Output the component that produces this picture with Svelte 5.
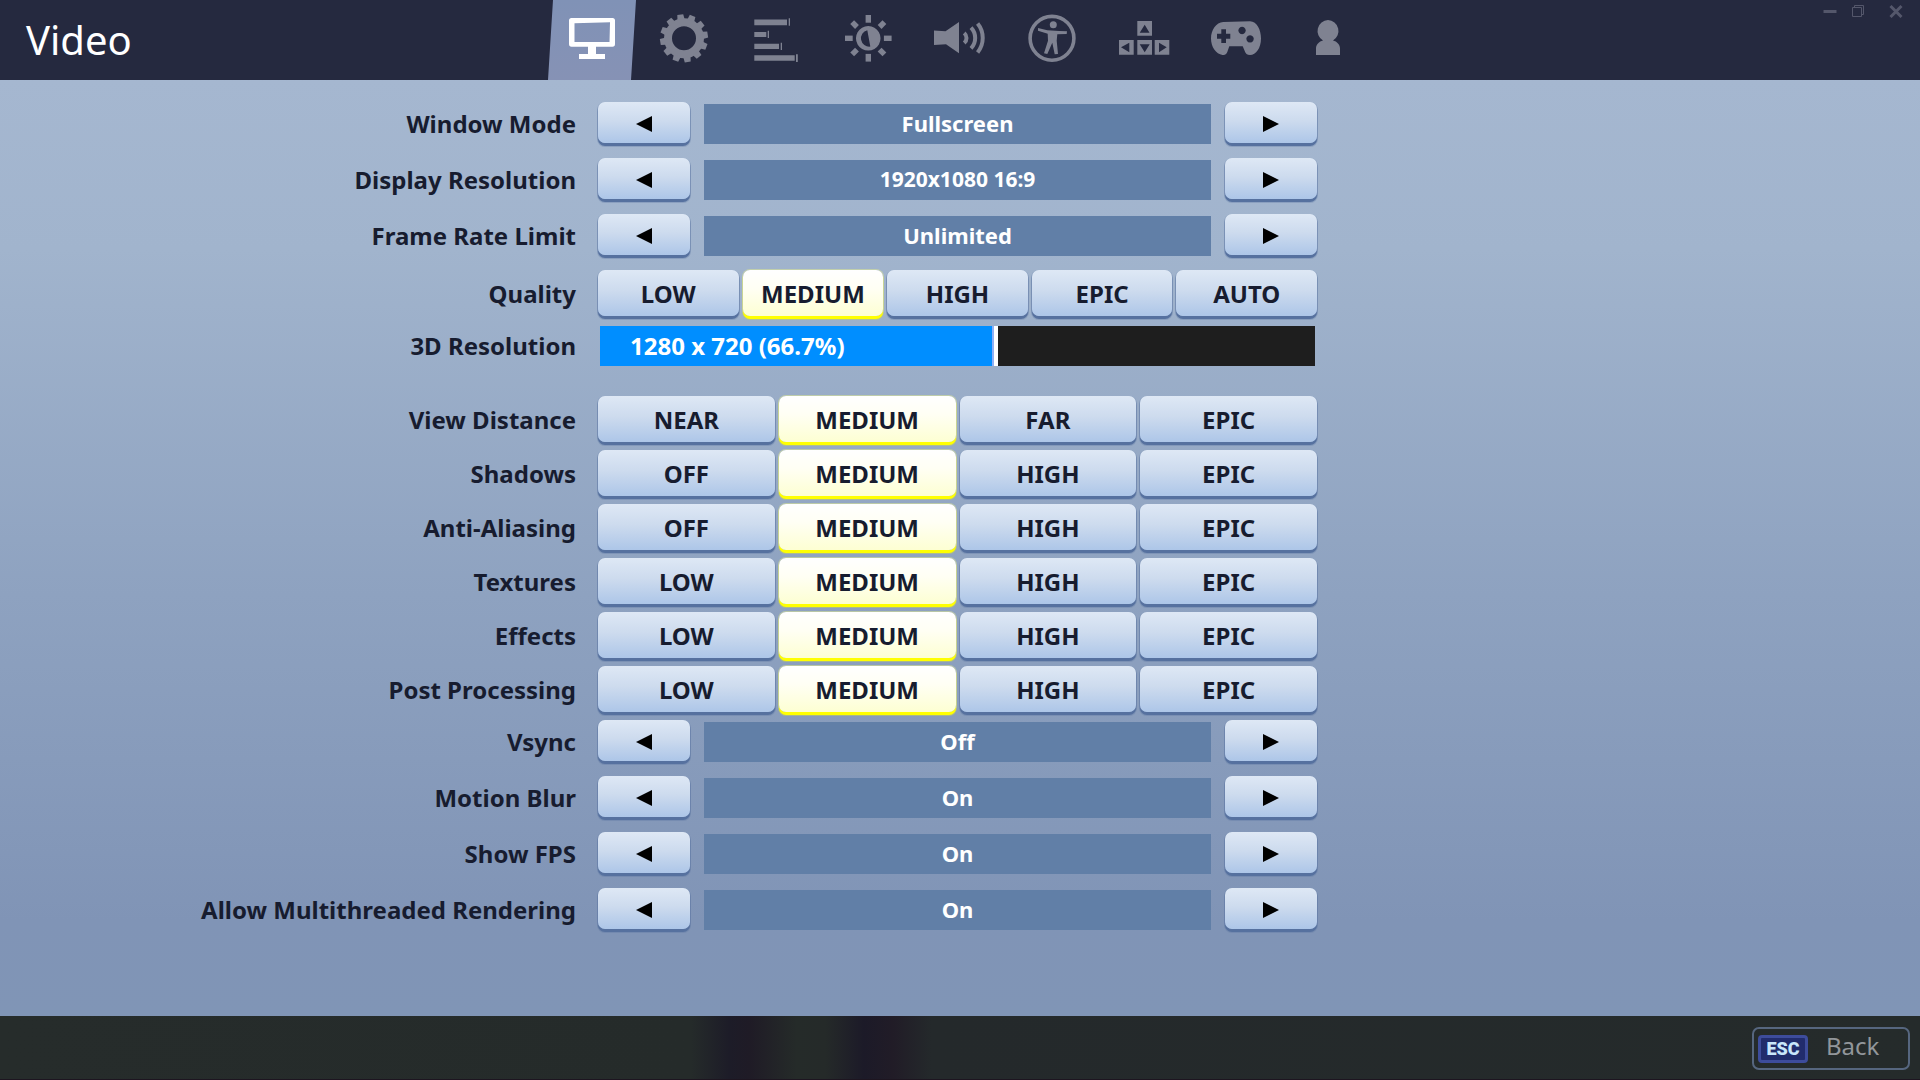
<script lang="ts">
  type Setting = {
    id: string;
    label: string;
    kind: 'cycle' | 'choice' | 'slider';
    options: string[];
    index: number;
  };

  const tabs = [
    'Video', 'Game', 'Game UI', 'Brightness', 'Audio',
    'Accessibility', 'Input', 'Controller', 'Account'
  ];
  let activeTab = $state(0);

  // Each group becomes one block of evenly spaced rows
  let groups: { name: string; rows: Setting[] }[] = $state([
    {
      name: 'display',
      rows: [
        { id: 'window-mode', label: 'Window Mode', kind: 'cycle', options: ['Fullscreen', 'Windowed', 'Borderless'], index: 0 },
        { id: 'resolution', label: 'Display Resolution', kind: 'cycle', options: ['1920x1080 16:9', '1600x900 16:9', '1280x720 16:9'], index: 0 },
        { id: 'frame-rate', label: 'Frame Rate Limit', kind: 'cycle', options: ['Unlimited', '144 FPS', '60 FPS', '30 FPS'], index: 0 },
        { id: 'quality', label: 'Quality', kind: 'choice', options: ['LOW', 'MEDIUM', 'HIGH', 'EPIC', 'AUTO'], index: 1 }
      ]
    },
    {
      name: 'scale',
      rows: [{ id: 'resolution-3d', label: '3D Resolution', kind: 'slider', options: [], index: 0 }]
    },
    {
      name: 'details',
      rows: [
        { id: 'view-distance', label: 'View Distance', kind: 'choice', options: ['NEAR', 'MEDIUM', 'FAR', 'EPIC'], index: 1 },
        { id: 'shadows', label: 'Shadows', kind: 'choice', options: ['OFF', 'MEDIUM', 'HIGH', 'EPIC'], index: 1 },
        { id: 'anti-aliasing', label: 'Anti-Aliasing', kind: 'choice', options: ['OFF', 'MEDIUM', 'HIGH', 'EPIC'], index: 1 },
        { id: 'textures', label: 'Textures', kind: 'choice', options: ['LOW', 'MEDIUM', 'HIGH', 'EPIC'], index: 1 },
        { id: 'effects', label: 'Effects', kind: 'choice', options: ['LOW', 'MEDIUM', 'HIGH', 'EPIC'], index: 1 },
        { id: 'post-processing', label: 'Post Processing', kind: 'choice', options: ['LOW', 'MEDIUM', 'HIGH', 'EPIC'], index: 1 }
      ]
    },
    {
      name: 'toggles',
      rows: [
        { id: 'vsync', label: 'Vsync', kind: 'cycle', options: ['Off', 'On'], index: 0 },
        { id: 'motion-blur', label: 'Motion Blur', kind: 'cycle', options: ['Off', 'On'], index: 1 },
        { id: 'show-fps', label: 'Show FPS', kind: 'cycle', options: ['Off', 'On'], index: 1 },
        { id: 'multithreading', label: 'Allow Multithreaded Rendering', kind: 'cycle', options: ['Off', 'On'], index: 1 }
      ]
    }
  ]);

  // 3D resolution is stored as its height in lines
  const minLines = 274;
  const maxLines = 1080;
  let lines = $state(720);
  let scaleText = $derived(
    `${Math.round((lines * 16) / 9)} x ${lines} (${((lines / maxLines) * 100).toFixed(1)}%)`
  );
  let fill = $derived(((lines - minLines) / (maxLines - minLines)) * 100);

  function step(row: Setting, by: number) {
    row.index = (row.index + by + row.options.length) % row.options.length;
  }
</script>

{#snippet icon(i: number)}
  <svg class="icon" viewBox="0 0 92 80" fill="currentColor" aria-hidden="true">
    {#if i === 0}
      <path fill-rule="evenodd" d="M25.500 18H66.500Q69 18 69 20.500V44Q69 46.700 66.500 46.700H50V54H59V59H33V54H42V46.700H25.500Q23 46.700 23 44V20.500Q23 18 25.500 18ZM28.500 23.300V42H63.500L64 22.300Z" />
    {:else if i === 1}
      <circle cx="46" cy="38.300" r="16" fill="none" stroke="currentColor" stroke-width="8" />
      {#each Array(12) as _, n}
        <polygon points="42.400,19.500 43,14.300 49,14.300 49.600,19.500" transform="rotate({n * 30 - 9} 46 38.300)" />
      {/each}
    {:else if i === 2}
      <path d="M24.300 19.500H57V25.300H24.300ZM58.700 18.300H60V25.700H58.700ZM24.300 32H36.300V37H24.300ZM37.700 30.700H39V38H37.700ZM24.300 43.700H49V49H24.300ZM50.700 42.700H52V50H50.700ZM24.300 55.300H64.700V60.700H24.300ZM66 54.300H67.800V62H66Z" />
    {:else if i === 3}
      <path fill-rule="evenodd" d="M46.300 26A12.300 12.300 0 1 1 46.200 26ZM45.300 30.300A8.300 8.300 0 0 0 48.300 46.600Z" />
      {#each Array(4) as _, n}
        <g transform="rotate({n * 90} 46.300 38.300)">
          <rect x="43.600" y="15" width="5.400" height="7.700" />
          <rect x="43.600" y="15.500" width="5.400" height="6.800" transform="rotate(45 46.300 38.300)" />
        </g>
      {/each}
    {:else if i === 4}
      <polygon points="20,30.500 31.500,31.300 45,22 45,53.300 32,44.300 20,45" />
      <path fill="none" stroke="currentColor" stroke-width="4" d="M50.200 32.900A6.800 6.800 0 0 1 50.200 43.100M57 27.700A14.800 14.800 0 0 1 57 48.300M63.600 23.600A22.800 22.800 0 0 1 63.600 52.400" />
    {:else if i === 5}
      <circle cx="46" cy="38.300" r="21.900" fill="none" stroke="currentColor" stroke-width="3.600" />
      <circle cx="47.300" cy="24.800" r="3.500" />
      <polygon points="32,28 41.300,30.300 53.300,31 61,31.300 60.700,34 51.300,34.300 50.700,40.700 52,54 48.700,54.300 46.300,42.700 41.300,54 38,53.300 42,40.700 41.700,33.700 32,30.700" />
    {:else if i === 6}
      <path fill-rule="evenodd" d="M39.300 21H54V35.700H39.300ZM46.700 24.700L41.700 32.700H51.500ZM21 40H35.700V54.700H21ZM23 47.300L31.300 52.300V42.700ZM39.300 40H54V54.700H39.300ZM41.700 44.300L46.700 52.300L51.700 44.300ZM56.700 40H71.300V54.700H56.700ZM61 42.700V52.300L68.700 47.300Z" />
    {:else if i === 7}
      <path fill-rule="evenodd" d="M33.300 22L60 21.300C67 21.300 71 30 71 38.500C71 48 66 55 60 55C57 55 55.500 53.500 54.500 50.500L52.700 46.300H39.300L37.300 52C36.500 54.500 34.500 55 32.500 55C26 54 21 47 21 38.500C21 30 26 22.500 33.300 22ZM31.300 29.300V33.700H27V38.700H31.300V43H36V38.700H40.300V33.700H36V29.300ZM52 26.800A3.700 3.700 0 1 0 52.100 26.800ZM60 35.200A3.700 3.700 0 1 0 60.100 35.200Z" />
    {:else}
      <path d="M46 20A11 11 0 0 1 51 40.500C55 41.500 58 44.500 58 48.500V55H34V48.500C34 44.500 37 41.500 41 40.500A11 11 0 0 1 46 20Z" />
    {/if}
  </svg>
{/snippet}

<div class="screen">
  <header>
    <h1>Video</h1>

    <nav class="tabs" aria-label="Settings sections">
      {#each tabs as tab, i}
        <button
          class="tab"
          class:active={activeTab === i}
          aria-label={tab}
          aria-current={activeTab === i ? 'page' : undefined}
          onclick={() => (activeTab = i)}
        >
          {@render icon(i)}
        </button>
      {/each}
    </nav>

    <div class="window-controls">
      <button aria-label="Minimize">
        <svg viewBox="0 0 14 14"><path d="M0.500 7.500H13.500" stroke-width="3" /></svg>
      </button>
      <button aria-label="Restore">
        <svg viewBox="0 0 14 14"><path d="M1.500 3.500H10.500V12.500H1.500ZM3.500 3V1.500H12.500V10.500H11" /></svg>
      </button>
      <button aria-label="Close">
        <svg viewBox="0 0 14 14"><path d="M1.500 2L12.500 13M12.500 2L1.500 13" stroke-width="3" /></svg>
      </button>
    </div>
  </header>

  <main>
    {#each groups as group}
      <div class="group {group.name}">
        {#each group.rows as row}
          <div class="row">
            {#if row.kind === 'slider'}
              <label class="label" for={row.id}>{row.label}</label>
              <div class="slider">
                <input
                  id={row.id}
                  type="range"
                  min={minLines}
                  max={maxLines}
                  bind:value={lines}
                  style="--fill: {fill}%"
                />
                <span class="slider-text">{scaleText}</span>
              </div>
            {:else if row.kind === 'cycle'}
              <span class="label" id={row.id}>{row.label}</span>
              <div class="cycle" role="group" aria-labelledby={row.id}>
                <button class="key" aria-label="Previous" onclick={() => step(row, -1)}>
                  <svg class="arrow" viewBox="0 0 16 16"><path d="M16 0V16L0 8Z" /></svg>
                </button>
                <output class="value" class:long={row.options[row.index].length > 12}>
                  {row.options[row.index]}
                </output>
                <button class="key" aria-label="Next" onclick={() => step(row, 1)}>
                  <svg class="arrow" viewBox="0 0 16 16"><path d="M0 0V16L16 8Z" /></svg>
                </button>
              </div>
            {:else}
              <span class="label" id={row.id}>{row.label}</span>
              <div class="choice" role="group" aria-labelledby={row.id}>
                {#each row.options as option, n}
                  <button
                    class="key tall"
                    class:selected={row.index === n}
                    aria-pressed={row.index === n}
                    onclick={() => (row.index = n)}
                  >
                    {option}
                  </button>
                {/each}
              </div>
            {/if}
          </div>
        {/each}
      </div>
    {/each}
  </main>

  <footer>
    <button class="back">
      <kbd>ESC</kbd>
      <span>Back</span>
    </button>
  </footer>
</div>

<style>
  :global(body) {
    margin: 0;
    background: #252b2b;
  }

  .screen {
    display: flex;
    flex-direction: column;
    min-height: 100vh;
    font-family: "Noto Sans", sans-serif;
    color: #171c2f;
  }

  button {
    margin: 0;
    padding: 0;
    border: none;
    background: none;
    font: inherit;
    color: inherit;
    cursor: pointer;
  }

  svg {
    display: block;
  }

  /* Header */
  header {
    display: grid;
    grid-template-columns: 1fr auto 1fr;
    height: 80px;
    background: #25293f;
  }

  h1 {
    margin: 0;
    padding-left: 26px;
    font-size: 40px;
    font-weight: 400;
    line-height: 80px;
    color: #fff;
  }

  .tabs {
    display: flex;
  }

  .tab {
    width: 92px;
    height: 80px;
    color: #7f8291;
  }

  .tab.active {
    color: #fff;
    background: linear-gradient(#8092b6, #8692b5);
    clip-path: polygon(7px 0, 90px 0, 85px 100%, 2px 100%);
  }

  .icon {
    width: 92px;
    height: 80px;
  }

  .window-controls {
    display: flex;
    justify-content: flex-end;
    align-items: flex-start;
    padding: 4px 17px 0 0;
  }

  .window-controls button {
    margin-left: 14px;
  }

  .window-controls button:last-child {
    margin-left: 24px;
  }

  .window-controls svg {
    width: 14px;
    height: 14px;
    fill: none;
    stroke: #54576b;
  }

  /* Settings */
  main {
    flex: 1;
    padding: 22px 0;
    background: linear-gradient(#a5b7d0 0%, #a1b4cd 18%, #8ea2c0 55%, #8094b6 90%, #8095b6 100%);
  }

  .group {
    display: flex;
    flex-direction: column;
    gap: 12px;
  }

  .scale {
    margin: 7px 0 30px;
  }

  .details {
    gap: 5px;
    margin-bottom: 5px;
  }

  .row {
    display: grid;
    grid-template-columns: 30% 37.45%;
    column-gap: 22px;
    align-items: center;
  }

  .label {
    padding-bottom: 1px;
    font-size: 24px;
    font-weight: 700;
    line-height: 32px;
    text-align: right;
    white-space: nowrap;
  }

  .cycle {
    display: grid;
    grid-template-columns: 92px 1fr 92px;
    gap: 14px;
    align-items: center;
  }

  .choice {
    display: grid;
    grid-auto-flow: column;
    grid-auto-columns: 1fr;
    gap: 4px;
  }

  .key {
    display: flex;
    justify-content: center;
    align-items: center;
    height: 41px;
    margin-bottom: 3px;
    padding-top: 3px;
    box-sizing: border-box;
    border-radius: 7px;
    background: linear-gradient(#dee8f5, #cddbee 45%, #adc6e8);
    box-shadow: 0 3px 0 #56719f, 0 1px 0 1px rgba(86, 113, 159, 0.3), 0 3px 0 1px rgba(86, 113, 159, 0.3);
    font-size: 24px;
    font-weight: 700;
    line-height: 32px;
  }

  .key.tall {
    height: 46px;
    padding-top: 1px;
  }

  .key.selected {
    background: linear-gradient(#fff, #fffff4 40%, #fdffd2);
    box-shadow: 0 3px 0 #ff0, 0 0 0 1px rgba(215, 225, 150, 0.6), 0 3px 0 1px rgba(200, 210, 90, 0.5);
  }

  .arrow {
    width: 16px;
    height: 16px;
  }

  .value {
    padding-bottom: 2px;
    background: #617fa7;
    color: #fff;
    font-size: 22px;
    font-weight: 700;
    line-height: 38px;
    text-align: center;
  }

  .value.long {
    font-size: 21px;
  }

  .slider {
    position: relative;
    margin: 0 2px;
  }

  .slider input {
    display: block;
    width: 100%;
    height: 40px;
    margin: 0;
    appearance: none;
    background: linear-gradient(to right, #008eff var(--fill), #1e1e1e var(--fill));
    cursor: pointer;
  }

  .slider input::-webkit-slider-thumb {
    appearance: none;
    box-sizing: border-box;
    width: 6px;
    height: 40px;
    border-left: 2px solid #8fb0f5;
    background: #fff;
  }

  .slider-text {
    position: absolute;
    top: 0;
    left: 30px;
    font-size: 24px;
    font-weight: 700;
    line-height: 40px;
    color: #fff;
    pointer-events: none;
  }

  /* Footer, with the dimmed lobby showing through */
  footer {
    display: flex;
    justify-content: flex-end;
    align-items: center;
    height: 64px;
    padding: 2px 10px 0;
    box-sizing: border-box;
    border-bottom: 1px solid #1d1520;
    background: linear-gradient(
      to right,
      #262c2b 0%, #252b2a 36%, #1d1c28 38%, #1f1b26 39%, #252b29 41.5%,
      #252a29 43%, #1c1a28 45%, #211c27 46.5%, #24292b 48.5%, #252b2b 100%
    );
  }

  .back {
    display: flex;
    align-items: center;
    width: 158px;
    height: 43px;
    padding: 0 4px;
    box-sizing: border-box;
    border: 2px solid #56667f;
    border-radius: 7px;
    font-size: 24px;
    line-height: 32px;
    color: #92969a;
  }

  .back span {
    margin-left: 18px;
    padding-bottom: 6px;
  }

  kbd {
    width: 50px;
    box-sizing: border-box;
    border: 3px solid #3d4c9b;
    border-radius: 4px;
    background: #212c6c;
    color: #c9e6fb;
    font-family: Roboto, sans-serif;
    font-size: 18px;
    font-weight: 900;
    line-height: 22px;
    text-align: center;
  }
</style>
